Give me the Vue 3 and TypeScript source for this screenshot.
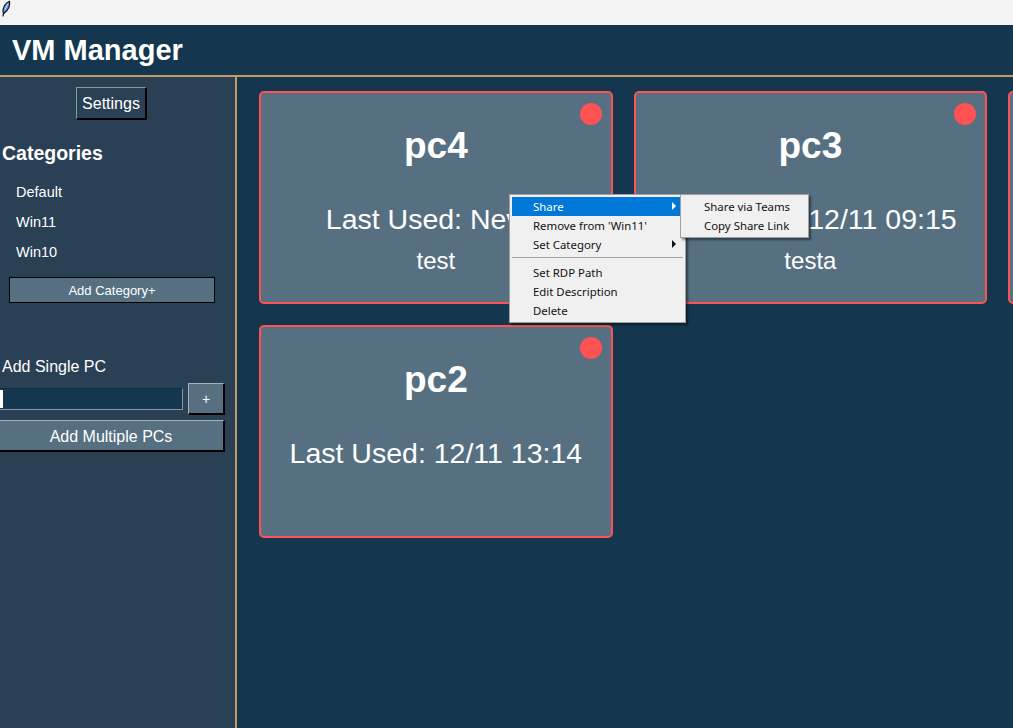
<script setup lang="ts">
interface Machine {
  name: string
  used: string
  note: string
}
const machines: Machine[] = [
  { name: 'pc4', used: 'Last Used: Never', note: 'test' },
  { name: 'pc3', used: 'Last Used: 12/11 09:15', note: 'testa' },
  { name: 'pc1', used: 'Last Used: 12/11 10:02', note: '' },
  { name: 'pc2', used: 'Last Used: 12/11 13:14', note: '' },
]
const categories = ['Default', 'Win11', 'Win10']
</script>

<template>
  <div class="window">
    <div class="titlebar">
      <svg class="feather" width="12" height="20" viewBox="0 0 12 20">
        <path d="M3 12.5 C2.5 8 5 3 9.5 1.2 C10.5 5 8.5 10 4.2 13.2 Z" fill="#5f8fd8" stroke="#0c1424" stroke-width="1.1" />
        <path d="M7.8 4 L4.8 10" stroke="#d6e4f7" stroke-width="1" fill="none" />
        <path d="M3.6 13 L3 16.5" stroke="#0c1424" stroke-width="1.3" fill="none" />
      </svg>
    </div>
    <header class="header"><h1>VM Manager</h1></header>
    <div class="body">
      <aside class="sidebar">
        <button class="settings">Settings</button>
        <h2>Categories</h2>
        <ul class="cats">
          <li v-for="c in categories" :key="c">{{ c }}</li>
        </ul>
        <button class="add-cat">Add Category+</button>
        <div class="single-label">Add Single PC</div>
        <div class="single-row">
          <div class="input"><span class="caret"></span></div>
          <button class="raised plus">+</button>
        </div>
        <button class="raised multi">Add Multiple PCs</button>
      </aside>
      <main class="main">
        <div class="grid">
          <article v-for="m in machines" :key="m.name" class="card">
            <span class="dot"></span>
            <div class="name">{{ m.name }}</div>
            <div class="used">{{ m.used }}</div>
            <div class="note">{{ m.note }}</div>
          </article>
        </div>
      </main>
    </div>

    <div class="menu primary">
      <div class="item active">Share<span class="arrow"></span></div>
      <div class="item">Remove from 'Win11'</div>
      <div class="item">Set Category<span class="arrow"></span></div>
      <div class="sep"></div>
      <div class="item">Set RDP Path</div>
      <div class="item">Edit Description</div>
      <div class="item">Delete</div>
    </div>
    <div class="menu secondary">
      <div class="item">Share via Teams</div>
      <div class="item">Copy Share Link</div>
    </div>
  </div>
</template>

<style>
html, body { margin: 0; overflow: hidden; background: #14374f; }
</style>

<style scoped>
.window {
  position: relative;
  width: 1013px;
  height: 728px;
  overflow: hidden;
  display: flex;
  flex-direction: column;
  font-family: "Liberation Sans", Arial, sans-serif;
  color: #fff;
  background: #14374f;
}
.titlebar { height: 25px; background: #f3f3f3; flex: none; }
.feather { display: block; }
.header {
  height: 50px;
  flex: none;
  background: #14374f;
  border-bottom: 2px solid #c49a64;
  display: flex;
  align-items: center;
  padding-left: 12px;
}
.header h1 { margin: 0; font-size: 29px; font-weight: 700; }
.body { flex: 1; display: flex; min-height: 0; }
.sidebar {
  width: 237px;
  flex: none;
  box-sizing: border-box;
  background: #2a4055;
  border-right: 2px solid #c49a64;
  display: flex;
  flex-direction: column;
  align-items: flex-start;
  padding-top: 10px;
}
button { font-family: inherit; color: #fff; margin: 0; padding: 0; }
.settings {
  width: 71px;
  height: 33px;
  margin-left: 76px;
  padding-top: 2px;
  font-size: 16px;
  background: #2a4055;
  border-style: solid;
  border-color: #8a98a5 #000 #000 #8a98a5;
  border-width: 1px 2px 2px 1px;
}
h2 { margin: 22px 0 0 2px; font-size: 19.5px; font-weight: 700; line-height: 22px; }
.cats { list-style: none; margin: 13px 0 0; padding: 0 0 0 16px; font-size: 14.5px; }
.cats li { height: 30px; line-height: 30px; }
.add-cat {
  width: 206px;
  height: 26px;
  margin: 10px 0 0 9px;
  font-size: 13px;
  background: #567082;
  border: 1px solid #000;
}
.single-label { margin: 54px 0 0 2px; font-size: 16px; line-height: 20px; }
.single-row { display: flex; align-items: center; margin: 6px 0 0 -10px; }
.input {
  width: 193px;
  height: 22px;
  box-sizing: border-box;
  background: #14374f;
  border: 1px solid;
  border-color: #122b3e #8a98a5 #8a98a5 #122b3e;
  padding: 1px 0 1px 9px;
}
.caret { display: block; width: 3px; height: 18px; background: #fff; }
.raised {
  background: #567082;
  border-style: solid;
  border-width: 1px 2px 2px 1px;
  border-color: #a4b1bb #000 #000 #a4b1bb;
}
.plus { width: 37px; height: 32px; margin-left: 5px; font-size: 14px; }
.multi { width: 227px; height: 32px; margin: 5px 0 0 -2px; padding-top: 2px; font-size: 16px; }
.main { flex: 1; min-width: 0; padding: 14px 0 0 22px; overflow: hidden; }
.grid { display: grid; grid-template-columns: repeat(3, 353.75px); gap: 21px 20.75px; }
.card {
  position: relative;
  height: 213px;
  box-sizing: border-box;
  background: #567082;
  border: 2px solid #ff5252;
  border-radius: 5px;
  text-align: center;
  padding-top: 33px;
}
.dot {
  position: absolute;
  top: 10px;
  right: 9px;
  width: 22px;
  height: 22px;
  border-radius: 50%;
  background: #ff5252;
}
.name { font-size: 37px; font-weight: 700; line-height: 40px; }
.used { margin-top: 36px; font-size: 28.5px; line-height: 34px; }
.note { margin-top: 10px; font-size: 24px; line-height: 30px; min-height: 30px; }
.menu {
  position: absolute;
  box-sizing: border-box;
  background: #f0f0f0;
  border: 1px solid #a0a0a0;
  padding: 2px;
  box-shadow: 2px 2px 2px rgba(0, 0, 0, 0.45);
  font-family: "Noto Sans", sans-serif;
  font-size: 11.4px;
  color: #111;
}
.primary { left: 509px; top: 194px; width: 177px; height: 129px; }
.secondary { left: 680px; top: 194px; width: 129px; height: 44px; }
.item {
  position: relative;
  height: 19px;
  line-height: 19px;
  padding-left: 21px;
  white-space: nowrap;
}
.active { background: #0078d7; color: #fff; }
.arrow {
  position: absolute;
  right: 7px;
  top: 5px;
  border-left: 4px solid currentColor;
  border-top: 4px solid transparent;
  border-bottom: 4px solid transparent;
}
.sep { height: 1px; background: #a0a0a0; margin: 3px 0 5px; }
</style>
